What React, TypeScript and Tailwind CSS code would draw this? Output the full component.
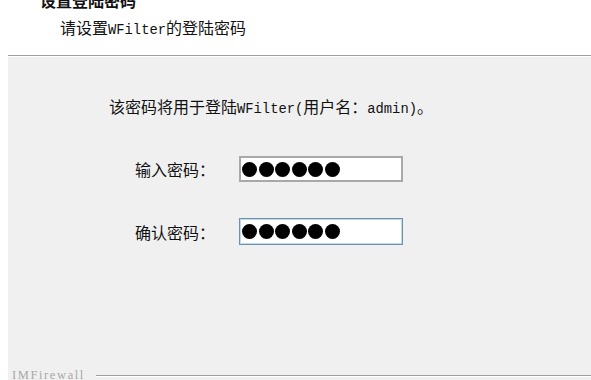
import React from "react";

const M = ({ children }: { children: React.ReactNode }) => (
  <span className="font-['Liberation_Mono',monospace] text-[13.8px]">{children}</span>
);

const Dots = () => (
  <div className="flex gap-[1.5px]">
    {[0, 1, 2, 3, 4, 5].map((i) => (
      <div key={i} className="w-[15px] h-[15px] rounded-full bg-black" />
    ))}
  </div>
);

export default function App() {
  return (
    <div className="w-[591px] h-[380px] flex bg-white overflow-hidden text-[16px] text-[#111111] font-['Noto_Sans_CJK_SC',sans-serif]">
      <div className="w-[8px] bg-white" />
      <div className="flex-1 flex flex-col">
        <div className="h-[55px] bg-white pl-[32px]">
          <div className="-mt-[10px] leading-[20px] font-bold">设置登陆密码</div>
          <div className="pl-[20px] leading-[22px] mt-[6px]">
            请设置<M>WFilter</M>的登陆密码
          </div>
        </div>
        <div className="h-[1px] bg-[#a0a0a0]" />
        <div className="h-[1px] bg-white" />
        <div className="flex-1 bg-[#f0f0f0] flex flex-col">
          <div className="pl-[101px] pt-[38px] leading-[22px]">
            该密码将用于登陆<M>WFilter(</M>用户名：<M>admin)</M>。
          </div>
          <div className="flex items-center mt-[35px] pl-[127px]">
            <div className="w-[104px] leading-[22px]">输入密码：</div>
            <div className="w-[164px] h-[26px] bg-white border-2 border-[#a9a9a9] flex items-center pl-[1px]">
              <Dots />
            </div>
          </div>
          <div className="flex items-center mt-[36px] pl-[127px]">
            <div className="w-[104px] leading-[22px]">确认密码：</div>
            <div className="w-[164px] h-[27px] bg-white border border-[#6f91a8] shadow-[inset_0_0_0_1px_#b9dcf0] flex items-center pl-[2px]">
              <Dots />
            </div>
          </div>
          <div className="flex-1" />
          <div className="flex items-end h-[14px] -mb-[2px]">
            <div className="pl-[4px] text-[12.5px] leading-[14px] text-[#a8a8a8] font-['Liberation_Serif',serif] tracking-[1.6px]">
              IMFirewall
            </div>
            <div className="flex-1 ml-[11px] mb-[5px] h-[2px] border-t border-[#a0a0a0] border-b border-b-white" />
          </div>
        </div>
      </div>
    </div>
  );
}
